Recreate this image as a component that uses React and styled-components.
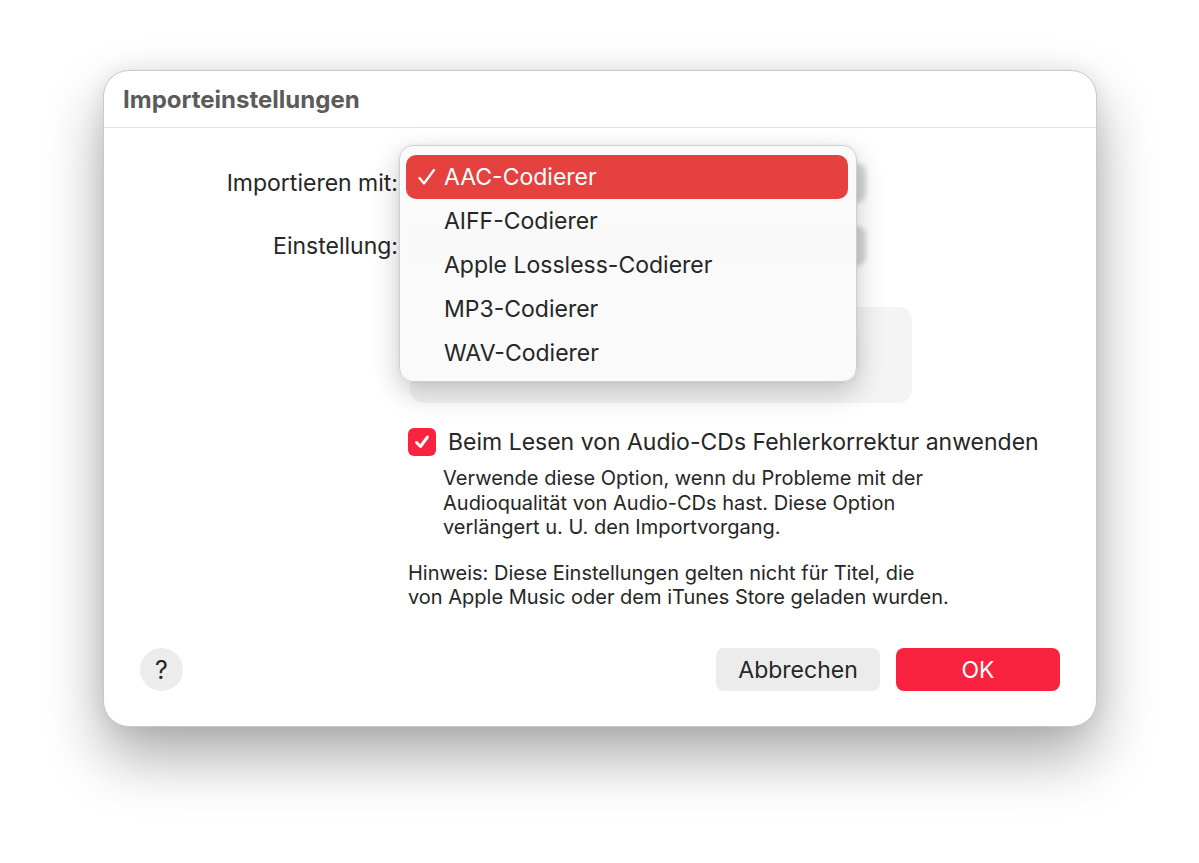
import styled, { createGlobalStyle } from "styled-components";

const GlobalStyle = createGlobalStyle`
  html, body {
    margin: 0;
    padding: 0;
    background: #ffffff;
  }
  body {
    font-family: Inter, "Noto Sans", "Liberation Sans", sans-serif;
    color: #262626;
    -webkit-font-smoothing: antialiased;
  }
`;

const Page = styled.div`
  width: 1199px;
  height: 863px;
  padding: 70px 0 0 103px;
  box-sizing: border-box;
  overflow: hidden;
`;

const Dialog = styled.div`
  position: relative;
  width: 994px;
  height: 657px;
  box-sizing: border-box;
  background: #ffffff;
  border: 1px solid #c9c9c9;
  border-radius: 26px;
  box-shadow: 0 30px 60px rgba(0, 0, 0, 0.33), 0 0 22px rgba(0, 0, 0, 0.08);
  display: flex;
  flex-direction: column;
`;

const Header = styled.div`
  height: 56px;
  border-bottom: 1px solid #e3e3e3;
  padding-left: 19px;
  display: flex;
  align-items: center;
`;

const Title = styled.h1`
  margin: 0;
  font-size: 24px;
  font-weight: 700;
  color: #5b5b5b;
`;

const Body = styled.div`
  flex: 1;
  padding: 0 36px 35px 36px;
  display: flex;
  flex-direction: column;
`;

const Row = styled.div`
  display: flex;
  align-items: center;
  height: 40px;
  margin-top: ${(p) => p.$top}px;
`;

const Label = styled.div`
  width: 258px;
  text-align: right;
  font-size: 23px;
  color: #262626;
`;

const Popup = styled.div`
  margin-left: 7px;
  width: 461px;
  height: 40px;
  border-radius: 9px;
  background: #d8d8d8;
  filter: blur(2px);
`;

const GroupBox = styled.div`
  margin: 41px 0 0 270px;
  width: 502px;
  height: 96px;
  border-radius: 14px;
  background: #f4f4f4;
  display: flex;
  align-items: center;
  padding-left: 8px;
  box-sizing: border-box;
`;

const BlurBar = styled.div`
  width: 440px;
  height: 40px;
  border-radius: 12px;
  background: #e9e9e9;
  filter: blur(4px);
`;

const CheckRow = styled.label`
  margin: 25px 0 0 268px;
  display: flex;
  align-items: center;
  gap: 12px;
  font-size: 23px;
  color: #262626;
`;

const CheckBox = styled.span`
  width: 28px;
  height: 28px;
  border-radius: 6px;
  background: #f9223f;
  display: flex;
  align-items: center;
  justify-content: center;
`;

const Description = styled.p`
  margin: 10px 0 0 303px;
  font-size: 20px;
  line-height: 24.5px;
  color: #262626;
`;

const Note = styled.p`
  margin: 21px 0 0 268px;
  font-size: 20px;
  line-height: 24px;
  color: #262626;
`;

const Footer = styled.div`
  margin-top: auto;
  display: flex;
  align-items: center;
  gap: 16px;
`;

const HelpButton = styled.button`
  width: 43px;
  height: 43px;
  border-radius: 50%;
  border: none;
  background: #ececec;
  font-family: inherit;
  font-size: 25px;
  color: #262626;
  margin-right: auto;
  padding: 0;
`;

const Button = styled.button`
  width: 164px;
  height: 43px;
  border: none;
  border-radius: 8px;
  font-family: inherit;
  font-size: 23px;
  background: ${(p) => (p.$primary ? "#f9223f" : "#ececec")};
  color: ${(p) => (p.$primary ? "#ffffff" : "#262626")};
`;

const Menu = styled.div`
  position: absolute;
  left: 295px;
  top: 74px;
  width: 458px;
  height: 237px;
  box-sizing: border-box;
  padding: 9px 8px 7px 6px;
  border-radius: 14px;
  border: 1px solid #cfcfcf;
  background: rgba(250, 250, 250, 0.97);
  box-shadow: 0 10px 28px rgba(0, 0, 0, 0.22), 0 0 4px rgba(0, 0, 0, 0.06);
`;

const MenuItem = styled.div`
  height: 44px;
  border-radius: 10px;
  display: flex;
  align-items: center;
  padding-left: 12px;
  font-size: 23px;
  background: ${(p) => (p.$selected ? "#e5413f" : "transparent")};
  color: ${(p) => (p.$selected ? "#ffffff" : "#262626")};
`;

const Check = styled.span`
  width: 26px;
  display: flex;
  align-items: center;
`;

const items = [
  "AAC-Codierer",
  "AIFF-Codierer",
  "Apple Lossless-Codierer",
  "MP3-Codierer",
  "WAV-Codierer",
];

const App = () => {
  return (
    <>
      <GlobalStyle />
      <Page>
        <Dialog>
          <Header>
            <Title>Importeinstellungen</Title>
          </Header>
          <Body>
            <Row $top={35}>
              <Label>Importieren mit:</Label>
              <Popup />
            </Row>
            <Row $top={23}>
              <Label>Einstellung:</Label>
              <Popup />
            </Row>
            <GroupBox>
              <BlurBar />
            </GroupBox>
            <CheckRow>
              <CheckBox>
                <svg width="18" height="18" viewBox="0 0 18 18">
                  <path
                    d="M3.5 9.5 L7.5 13.5 L14.5 4"
                    fill="none"
                    stroke="#ffffff"
                    strokeWidth="3"
                    strokeLinecap="round"
                    strokeLinejoin="round"
                  />
                </svg>
              </CheckBox>
              Beim Lesen von Audio-CDs Fehlerkorrektur anwenden
            </CheckRow>
            <Description>
              Verwende diese Option, wenn du Probleme mit der
              <br />
              Audioqualität von Audio-CDs hast. Diese Option
              <br />
              verlängert u. U. den Importvorgang.
            </Description>
            <Note>
              Hinweis: Diese Einstellungen gelten nicht für Titel, die
              <br />
              von Apple Music oder dem iTunes Store geladen wurden.
            </Note>
            <Footer>
              <HelpButton>?</HelpButton>
              <Button>Abbrechen</Button>
              <Button $primary>OK</Button>
            </Footer>
          </Body>
          <Menu>
            {items.map((item, i) => (
              <MenuItem key={item} $selected={i === 0}>
                <Check>
                  {i === 0 && (
                    <svg width="18" height="18" viewBox="0 0 18 18">
                      <path
                        d="M1.5 10 L6 15.5 L16 2"
                        fill="none"
                        stroke="#ffffff"
                        strokeWidth="2.2"
                        strokeLinecap="round"
                        strokeLinejoin="round"
                      />
                    </svg>
                  )}
                </Check>
                {item}
              </MenuItem>
            ))}
          </Menu>
        </Dialog>
      </Page>
    </>
  );
};

export default App;
